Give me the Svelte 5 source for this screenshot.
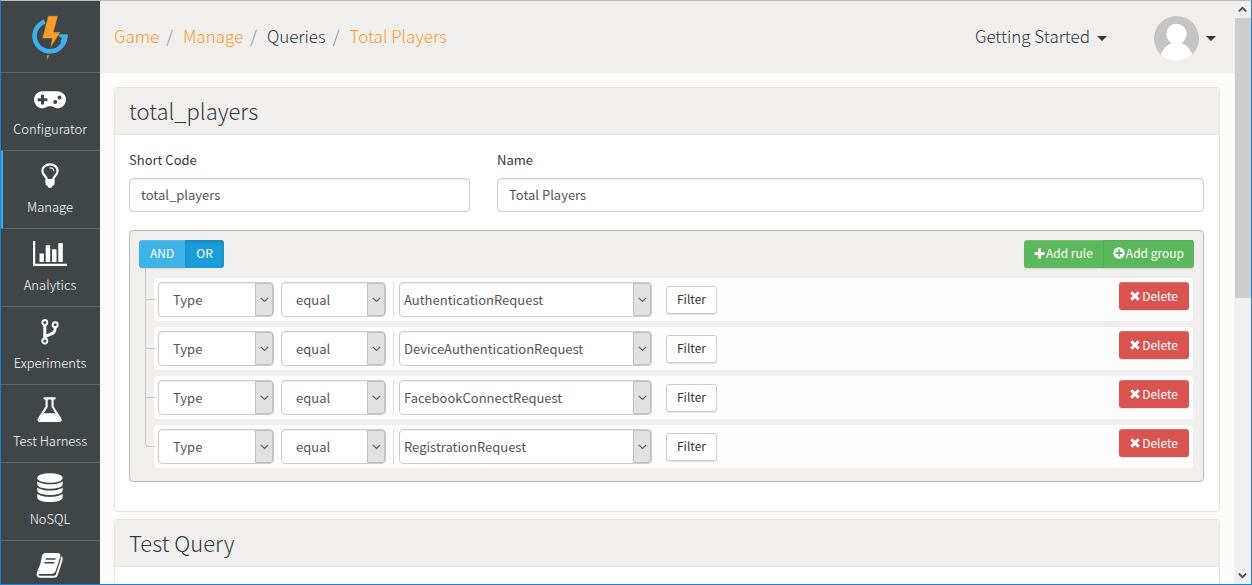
<script>
  const nav = [
    { label: 'Configurator', icon: 'gamepad' },
    { label: 'Manage', icon: 'bulb' },
    { label: 'Analytics', icon: 'chart' },
    { label: 'Experiments', icon: 'fork' },
    { label: 'Test Harness', icon: 'flask' },
    { label: 'NoSQL', icon: 'database' }
  ];
  const types = [
    'AuthenticationRequest',
    'DeviceAuthenticationRequest',
    'FacebookConnectRequest',
    'RegistrationRequest'
  ];
  let rules = $state(types.map((value, id) => ({ id, value })));
  let nextId = types.length;
  let active = $state('Manage');
  let condition = $state('OR');
  let shortCode = $state('total_players');
  let name = $state('Total Players');

  function addRule() {
    rules.push({ id: nextId++, value: types[0] });
  }
  function removeRule(id) {
    rules = rules.filter((r) => r.id !== id);
  }
</script>

{#snippet arrow()}
  <span class="arrow">
    <svg width="9" height="6" viewBox="0 0 9 6"><path d="M.8.8 4.5 4.5 8.2.8" fill="none" stroke="#606060" stroke-width="1.2" /></svg>
  </span>
{/snippet}

{#snippet icon(kind)}
  {#if kind === 'gamepad'}
    <svg width="32" height="20" viewBox="0 -2 32 20" fill="#fff">
      <path fill-rule="evenodd" d="M8.5.2h15a8.5 8.5 0 1 1-5.4 15.1h-4.2A8.5 8.5 0 1 1 8.5.2ZM7 3.8v3.4H3.6v3H7v3.4h3v-3.400h3.400v-3H10V3.800ZM21.200 8.900a2 2 0 1 0 0 4 2 2 0 0 0 0-4ZM25.500 4.500a2 2 0 1 0 0 4 2 2 0 0 0 0-4Z" />
    </svg>
  {:else if kind === 'bulb'}
    <svg width="18" height="28" viewBox="0 0 18 28">
      <path d="M6 16.500C5.700 13.500 1.400 12 1.400 7.900 1.400 4 4.800 1.300 9 1.300s7.600 2.700 7.600 6.600c0 4.100-4.300 5.600-4.600 8.600" fill="none" stroke="#fff" stroke-width="2.200" />
      <path d="M4.800 16h8.400c.8 1 .8 1.600.2 2.200.5.700.5 1.200 0 1.800.4 1.600-.5 2.700-2 2.800-.3 1.500-1.200 2.200-2.400 2.200s-2.100-.7-2.400-2.200c-1.500-.1-2.400-1.200-2-2.800-.5-.6-.5-1.100 0-1.800-.6-.6-.6-1.200.2-2.200Z" fill="#fff" />
      <path d="M9 4.800c2 0 3.600 1.100 3.800 2.900" fill="none" stroke="#fff" stroke-width="1.200" stroke-linecap="round" />
    </svg>
  {:else if kind === 'chart'}
    <svg width="34" height="28" viewBox="0 0 34 28" fill="#fff">
      <path d="M0 0h2.200v22.800H34V25H0ZM6.500 12.500h4.400v8.500H6.500ZM12.700 4.200h4.500V21h-4.500ZM19 8.200h4.500V21H19ZM25.300 2h4.500v19h-4.500Z" />
    </svg>
  {:else if kind === 'fork'}
    <svg width="18" height="28" viewBox="0 0 18 28" fill="none" stroke="#fff">
      <path d="M3.800 6v14M14.200 8.500c.1 5.500-2.900 6.200-6.200 7.300-2.400.8-4 1.400-4.200 3.500" stroke-width="3" />
      <circle cx="3.800" cy="3.500" r="2.500" fill="#404648" stroke-width="1.900" />
      <circle cx="14.200" cy="5.800" r="2.500" fill="#404648" stroke-width="1.900" />
      <circle cx="3.800" cy="22" r="2.500" fill="#404648" stroke-width="1.900" />
    </svg>
  {:else if kind === 'flask'}
    <svg width="26" height="28" viewBox="0 0 26 28">
      <path d="M7.500 1.400h10.200M9.600 1.500v8.200L2 21.600c-1 1.600-.4 2.400.8 2.400h19.600c1.200 0 1.800-.8.800-2.400L15.600 9.700V1.500" fill="none" stroke="#fff" stroke-width="2.100" stroke-linecap="round" />
      <path d="M6.800 16.200h11.600l5 7.500H1.800Z" fill="#fff" />
    </svg>
  {:else if kind === 'database'}
    <svg width="26" height="32" viewBox="0 0 26 32" fill="#fff">
      <ellipse cx="13" cy="5" rx="12.700" ry="4.800" />
      <path d="M.3 8.200C5 12.300 21 12.300 25.700 8.200v3c0 6-25.400 6-25.400 0ZM.3 14.500C5 18.600 21 18.600 25.700 14.500v3c0 6-25.400 6-25.400 0ZM.3 20.800C5 24.900 21 24.900 25.700 20.800v3.400c0 6.500-25.400 6.500-25.400 0Z" />
    </svg>
  {:else}
    <svg width="28" height="28" viewBox="0 0 28 28">
      <path d="M8 1h13.500c1.600 0 2.200 1 1.800 2.400L18.600 18c-.5 1.500-1.300 2-2.600 2H3.500C2 20 1.200 21 1.700 22.200c.3 1 1.200 1.600 2.500 1.600h13.600c1.500 0 2.500-.6 3-2L25.600 7c.4-1.300.2-2.300-.6-2.900" fill="none" stroke="#fff" stroke-width="2" />
      <path d="M8 .8h14c1.400 0 2 1 1.600 2.400L19 18c-.5 1.500-1.300 2-2.600 2H3.300L2.200 21.400C1 21 .8 19.800 1.300 18.400Q5 11 6 3C6.300 1.600 7 .8 8 .8Z" fill="#fff" />
      <path d="M9.600 6h10M8.400 9.800h10" stroke="#404648" stroke-width="1.600" />
    </svg>
  {/if}
{/snippet}

<div class="window">
  <nav class="sidebar" aria-label="Main">
    <a class="logo" href="#home" aria-label="Home">
      <svg width="38" height="48" viewBox="0 0 38 48">
        <path d="M13.800 7.600A15.300 15.300 0 1 0 34.200 22" fill="none" stroke="#3fb0e8" stroke-width="4.600" />
        <path d="M25.500 20.300h11.200c.1 4-1.200 7.500-3.400 10.500l-4.100-2.900c.7-1 1.200-2.300 1.500-3.600Z" fill="#3fb0e8" />
        <path d="M17 1.800h10.200L22.800 18h6.700L19 35l1.900-10.500H11.200ZM15.700 41h2.900l-2.900 6Z" fill="#f89c2c" stroke="#404648" stroke-width=".6" />
      </svg>
    </a>
    {#each nav as item}
      <a class="item" class:active={active === item.label} href="#{item.label}" onclick={() => (active = item.label)}>
        <span class="glyph">{@render icon(item.icon)}</span>
        <span>{item.label}</span>
      </a>
    {/each}
    <a class="item" href="#docs" aria-label="Docs">
      <span class="glyph">{@render icon('book')}</span>
    </a>
  </nav>

  <div class="page">
    <header>
      <ol class="crumbs">
        <li><a href="#game">Game</a></li>
        <li><a href="#manage">Manage</a></li>
        <li>Queries</li>
        <li><a href="#total">Total Players</a></li>
      </ol>
      <div class="tools">
        <button class="menu"><span class="title">Getting Started</span> <span class="caret"></span></button>
        <button class="menu" aria-label="Account">
          <svg width="45" height="45" viewBox="0 0 45 45">
            <clipPath id="round"><circle cx="22.500" cy="22.500" r="22.500" /></clipPath>
            <g clip-path="url(#round)">
              <rect width="45" height="45" fill="#c4c4c4" />
              <circle cx="22.500" cy="18" r="10.200" fill="#fff" />
              <path d="M5 43C8 33 13 28.500 18 27h9c5 1.500 10 6 13 16v4H5Z" fill="#fff" />
            </g>
          </svg>
          <span class="caret"></span>
        </button>
      </div>
    </header>

    <main>
      <section class="panel">
        <h2>total_players</h2>
        <div class="body">
          <div class="fields">
            <div class="field">
              <label for="code">Short Code</label>
              <input id="code" type="text" bind:value={shortCode} />
            </div>
            <div class="field">
              <label for="name">Name</label>
              <input id="name" type="text" bind:value={name} />
            </div>
          </div>

          <div class="builder">
            <div class="bar">
              <div class="group">
                {#each ['AND', 'OR'] as c}
                  <button class="btn info" class:on={condition === c} onclick={() => (condition = c)}>{c}</button>
                {/each}
              </div>
              <div class="group">
                <button class="btn success" onclick={addRule}>
                  <svg width="11" height="11" viewBox="0 0 11 11"><path d="M5.500.5v10M.5 5.500h10" stroke="#fff" stroke-width="3" /></svg>Add rule
                </button>
                <button class="btn success" onclick={addRule}>
                  <svg width="12" height="12" viewBox="0 0 12 12"><circle cx="6" cy="6" r="5.700" fill="#fff" /><path d="M6 2.600v6.800M2.600 6h6.800" stroke="#5cb85c" stroke-width="1.800" /></svg>Add group
                </button>
              </div>
            </div>
            <ul class="rules">
              {#each rules as rule (rule.id)}
                <li>
                  <span class="select field-name">
                    <select aria-label="Field"><option>Type</option></select>
                    {@render arrow()}
                  </span>
                  <span class="select operator">
                    <select aria-label="Operator"><option>equal</option><option>not equal</option></select>
                    {@render arrow()}
                  </span>
                  <span class="value">
                    <span class="select">
                      <select aria-label="Value" bind:value={rule.value}>
                        {#each types as t}<option>{t}</option>{/each}
                      </select>
                      {@render arrow()}
                    </span>
                  </span>
                  <button class="btn plain">Filter</button>
                  <button class="btn danger" onclick={() => removeRule(rule.id)}>
                    <svg width="10" height="10" viewBox="0 0 10 10"><path d="m1.300 1.300 7.400 7.400M8.700 1.300 1.300 8.700" stroke="#fff" stroke-width="3" /></svg>Delete
                  </button>
                </li>
              {/each}
            </ul>
          </div>
        </div>
      </section>

      <section class="panel">
        <h2>Test Query</h2>
        <div class="body"></div>
      </section>
    </main>
  </div>

  <div class="scroll" aria-hidden="true">
    <svg width="17" height="17" viewBox="0 0 17 17"><path d="M4.800 10.500 8.500 6.800l3.700 3.700" fill="none" stroke="#555" stroke-width="2" /></svg>
    <div class="track"><div class="thumb"></div></div>
    <svg width="17" height="17" viewBox="0 0 17 17"><path d="m4.800 6.500 3.700 3.700 3.700-3.700" fill="none" stroke="#555" stroke-width="2" /></svg>
  </div>
</div>

<style>
  :global(body) {
    margin: 0;
    overflow: hidden;
  }
  .window,
  .window :global(*) {
    box-sizing: border-box;
  }
  .window {
    display: flex;
    height: 100vh;
    border: 1px solid #1883d7;
    border-top-color: #bdbcbc;
    background: #fcfcfa;
    color: #33383b;
    font: 13px/20px 'Noto Sans CJK SC', 'Open Sans', sans-serif;
  }
  button,
  input,
  select {
    font: inherit;
    color: inherit;
  }
  svg {
    display: block;
    flex: none;
  }

  .sidebar {
    flex: none;
    width: 99px;
    overflow: hidden;
    background: #404648;
    font-weight: 300;
  }
  .sidebar a {
    display: flex;
    flex-direction: column;
    align-items: center;
    border-bottom: 1px solid #606567;
    color: #fff;
    text-decoration: none;
  }
  .logo {
    height: 72px;
    padding: 2px 1px 0 0;
    justify-content: center;
  }
  .item {
    height: 78px;
    padding: 8px 1px 0 0;
  }
  .item.active {
    box-shadow: inset 2px 0 #3fb0e8;
  }
  .glyph {
    display: flex;
    align-items: center;
    height: 38px;
    padding-bottom: 2px;
  }

  .page {
    flex: 1;
    min-width: 0;
    overflow: hidden;
  }
  header {
    display: flex;
    align-items: center;
    justify-content: space-between;
    height: 72px;
    padding: 2px 18px 0 14px;
    background: #f0efed;
    font-size: 17px;
    font-weight: 300;
  }
  .crumbs {
    display: flex;
    margin: 0;
    padding: 0 0 4px;
    list-style: none;
  }
  .crumbs li + li::before {
    content: '/';
    padding: 0 10px 0 7px;
    color: #888e92;
  }
  .crumbs a {
    color: #f89c2c;
    text-decoration: none;
  }
  .tools {
    display: flex;
    gap: 47px;
  }
  .menu {
    display: flex;
    align-items: center;
    gap: 7px;
    padding: 0;
    border: 0;
    background: none;
  }
  .title {
    padding-bottom: 4px;
  }
  .caret {
    border: 5px solid transparent;
    border-top-color: #33383b;
    border-bottom: 0;
  }

  main {
    display: grid;
    gap: 7px;
    padding: 14px;
  }
  .panel {
    border: 1px solid #e3e3e1;
    border-radius: 4px;
    background: #fff;
  }
  h2 {
    margin: 0;
    padding: 0 14px 2px;
    border-bottom: 1px solid #e3e3e1;
    background: #f0efed;
    font-size: 22px;
    font-weight: 300;
    line-height: 44px;
  }
  .body {
    min-height: 60px;
    padding: 15px 15px 29px 14px;
  }
  .fields {
    display: grid;
    grid-template-columns: calc((100% + 29px) / 3 - 27px) 1fr;
    gap: 27px;
    margin-bottom: 18px;
  }
  .field {
    display: grid;
    gap: 8px;
  }
  input {
    width: 100%;
    height: 34px;
    padding: 0 11px 2px;
    border: 1px solid #ccc;
    border-radius: 4px;
    background: #fff;
    box-shadow: inset 0 1px 1px rgba(0, 0, 0, 0.075);
    color: #555;
  }

  .builder {
    padding: 9px 9px 13px;
    border: 1px solid #bbbab8;
    border-radius: 4px;
    background: #f0efed;
  }
  .bar,
  .group {
    display: flex;
    justify-content: space-between;
  }
  .btn {
    display: flex;
    align-items: center;
    gap: 2px;
    height: 28px;
    padding: 0 11px 2px;
    border: 0;
    border-radius: 3px;
    box-shadow: inset 0 1px rgba(255, 255, 255, 0.15), 0 1px 1px rgba(0, 0, 0, 0.1);
    color: #fff;
    font-size: 12px;
  }
  .group .btn:first-child {
    border-radius: 3px 0 0 3px;
  }
  .group .btn:last-child {
    border-radius: 0 3px 3px 0;
  }
  .info {
    background: #3fb3e6;
  }
  .info.on {
    background: #1b9dd9;
    box-shadow: inset 0 2px 4px rgba(0, 0, 0, 0.15);
  }
  .btn.success {
    gap: 1px;
    padding: 0 10px 2px;
    background: #5cb85c;
  }
  .success + .success {
    box-shadow: inset 1px 1px #55ae55, 0 1px 1px rgba(0, 0, 0, 0.1);
  }
  .btn.danger {
    margin-left: auto;
    padding-bottom: 0;
    background: #d9534f;
  }
  .btn.plain {
    margin: 4px 0 0 14px;
    padding: 0 10px 2px;
    border: 1px solid #ccc;
    background: #fff;
    color: #33383b;
  }

  .rules {
    display: grid;
    gap: 6px;
    margin: 10px 1px 0 15px;
    padding: 0;
    list-style: none;
  }
  .rules li {
    position: relative;
    display: flex;
    align-items: flex-start;
    padding: 4px;
    border-radius: 4px;
    background: #fdfdfd;
  }
  .rules li::before,
  .rules li::after {
    content: '';
    position: absolute;
    left: -9px;
    width: 9px;
    border-left: 1px solid #c8c8c6;
  }
  .rules li::before {
    top: -10px;
    height: 31px;
    border-bottom: 1px solid #c8c8c6;
  }
  .rules li::after {
    top: 20px;
    bottom: 0;
  }
  .rules li:last-child::before {
    border-bottom-left-radius: 4px;
  }
  .rules li:last-child::after {
    display: none;
  }
  .select {
    position: relative;
    display: block;
  }
  .field-name {
    width: 116px;
    margin-right: 7px;
  }
  .operator {
    width: 105px;
    margin-right: 7px;
  }
  .value {
    padding-left: 5px;
    border-left: 1px solid #ddd;
  }
  .value .select {
    width: 253px;
  }
  select {
    display: block;
    appearance: none;
    width: 100%;
    height: 35px;
    padding: 0 20px 0 14px;
    border: 1px solid #ccc;
    border-radius: 4px;
    background: #fff;
    box-shadow: inset 0 1px 1px rgba(0, 0, 0, 0.075);
    color: #555;
  }
  .value select {
    padding-left: 4px;
  }
  .arrow {
    position: absolute;
    top: 1px;
    right: 1px;
    bottom: 1px;
    display: flex;
    align-items: center;
    justify-content: center;
    width: 18px;
    border: 1px solid #bebebe;
    border-radius: 0 3px 3px 0;
    background: #e1e1e1;
    pointer-events: none;
  }

  .scroll {
    display: flex;
    flex: none;
    flex-direction: column;
    width: 17px;
    background: #f0f0f0;
  }
  .track {
    flex: 1;
  }
  .thumb {
    height: 51%;
    margin-left: 1px;
    background: #cdcdcd;
  }
</style>
